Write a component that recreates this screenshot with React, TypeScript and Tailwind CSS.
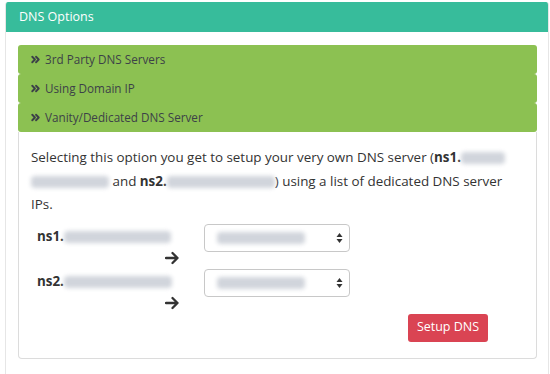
import { ChevronsRight } from 'lucide-react'

const font = { fontFamily: '"Open Sans", "Noto Sans", sans-serif' }

function Blur({ w }: { w: number }) {
  return (
    <span
      className="inline-block h-[12px] align-middle rounded-sm bg-gray-300 blur-[2px]"
      style={{ width: w }}
    />
  )
}

function AccordionItem({ title }: { title: string }) {
  return (
    <div className="flex h-[29px] items-center gap-[3px] rounded-[3px] bg-[#8cc152] pl-[11px] text-[11.7px] text-[#3c4148]">
      <ChevronsRight className="h-[13px] w-[13px]" strokeWidth={3.5} />
      <span>{title}</span>
    </div>
  )
}

function Updown() {
  return (
    <svg width="7" height="12" viewBox="0 0 7 12" className="text-[#333]">
      <path d="M3.5 1 L6.5 5 H0.5 Z" fill="currentColor" />
      <path d="M3.5 11 L6.5 7 H0.5 Z" fill="currentColor" />
    </svg>
  )
}

function Arrow() {
  return (
    <svg width="14" height="14" viewBox="0 0 14 14" className="text-[#333]">
      <path d="M1 7 H12.5 M7.5 2 L12.5 7 L7.5 12" fill="none" stroke="currentColor" strokeWidth="2.3" strokeLinecap="round" strokeLinejoin="round" />
    </svg>
  )
}

function NsRow({ label, w }: { label: string; w: number }) {
  return (
    <div className="flex items-start">
      <div className="w-[173px] shrink-0 pl-[6px] pt-[3px]">
        <div className="flex h-[20px] items-center text-[13.4px] font-bold text-[#333]">
          {label}
          <Blur w={w} />
        </div>
        <div className="flex justify-end pr-[25px] pt-[4px]">
          <Arrow />
        </div>
      </div>
      <div className="flex h-[28px] w-[146px] items-center justify-between rounded-[4px] border border-[#c8c8c8] bg-white pl-[12px] pr-[6px]">
        <Blur w={88} />
        <Updown />
      </div>
    </div>
  )
}

export default function App() {
  return (
    <div className="h-[374px] w-[550px] overflow-hidden bg-white pt-[2px] pl-[5px] pr-[1px]" style={font}>
      <div className="h-[400px] overflow-hidden rounded-t-[3px] border-x border-[#e6e6e6]">
        <div className="flex h-[30px] items-center bg-[#37bc9b] pl-[13px] text-[12.5px] text-white">
          DNS Options
        </div>
        <div className="pl-[12px] pr-[11px] pt-[13px]">
          <AccordionItem title="3rd Party DNS Servers" />
          <AccordionItem title="Using Domain IP" />
          <AccordionItem title="Vanity/Dedicated DNS Server" />
          <div className="flex h-[227px] flex-col rounded-b-[4px] border border-t-0 border-[#dcdcdc] px-[12px] pt-[14px]">
            <p className="text-[13.4px] leading-[23.5px] text-[#333]">
              Selecting this option you get to setup your very own DNS server (<b>ns1.</b>
              <Blur w={44} />
              <br />
              <Blur w={78} /> and <b>ns2.</b>
              <Blur w={108} />) using a list of dedicated DNS server
              <br />
              IPs.
            </p>
            <div className="mt-[7px] flex flex-col gap-[4px]">
              <NsRow label="ns1." w={107} />
              <NsRow label="ns2." w={108} />
            </div>
            <div className="flex justify-end pr-[36px] pt-[4px]">
              <button className="h-[28px] w-[80px] rounded-[3px] bg-[#da4453] text-[12.5px] text-white">
                Setup DNS
              </button>
            </div>
          </div>
        </div>
      </div>
    </div>
  )
}
